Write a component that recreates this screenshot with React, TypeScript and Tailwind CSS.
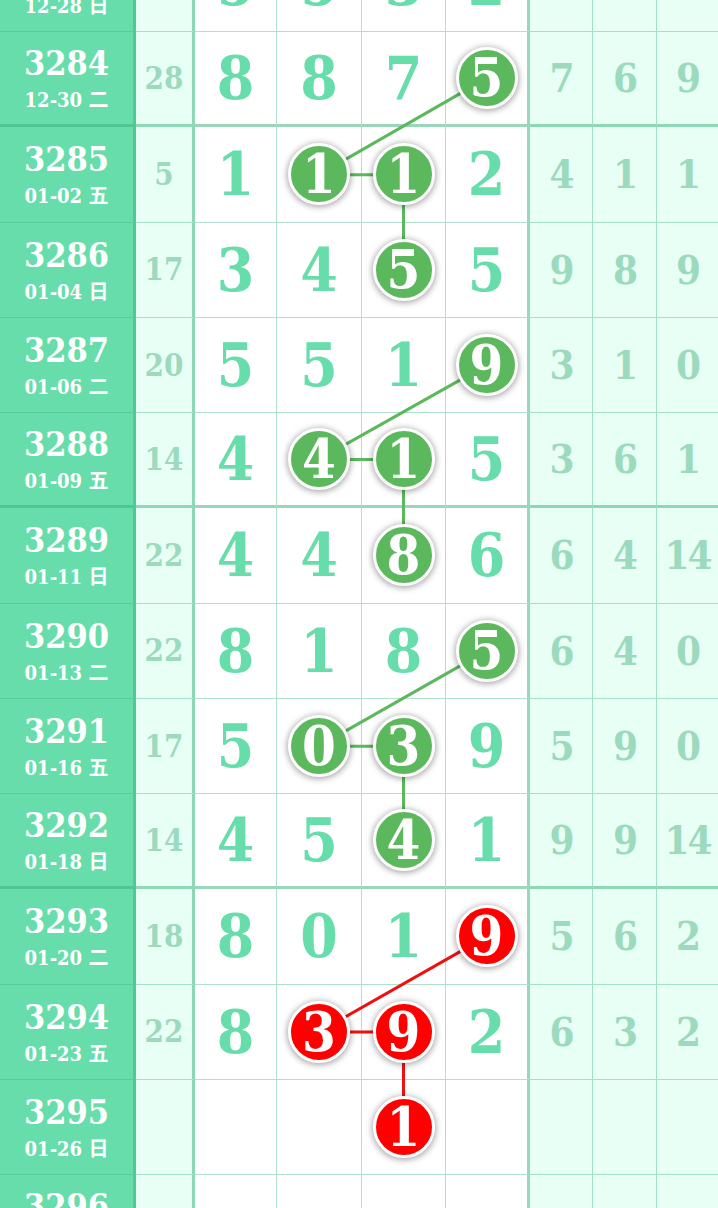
import React from "react";

const ROW_H = 95.25;

type Ball = "g" | "r" | null;
type Row = {
  no: string;
  date: string;
  sum: string;
  d: string[];
  balls: Ball[];
  r: string[];
};

const rows: Row[] = [
  { no: "3283", date: "12-28 日", sum: "16", d: ["5", "5", "3", "2"], balls: [null, null, null, null], r: ["3", "2", "1"] },
  { no: "3284", date: "12-30 二", sum: "28", d: ["8", "8", "7", "5"], balls: [null, null, null, "g"], r: ["7", "6", "9"] },
  { no: "3285", date: "01-02 五", sum: "5", d: ["1", "1", "1", "2"], balls: [null, "g", "g", null], r: ["4", "1", "1"] },
  { no: "3286", date: "01-04 日", sum: "17", d: ["3", "4", "5", "5"], balls: [null, null, "g", null], r: ["9", "8", "9"] },
  { no: "3287", date: "01-06 二", sum: "20", d: ["5", "5", "1", "9"], balls: [null, null, null, "g"], r: ["3", "1", "0"] },
  { no: "3288", date: "01-09 五", sum: "14", d: ["4", "4", "1", "5"], balls: [null, "g", "g", null], r: ["3", "6", "1"] },
  { no: "3289", date: "01-11 日", sum: "22", d: ["4", "4", "8", "6"], balls: [null, null, "g", null], r: ["6", "4", "14"] },
  { no: "3290", date: "01-13 二", sum: "22", d: ["8", "1", "8", "5"], balls: [null, null, null, "g"], r: ["6", "4", "0"] },
  { no: "3291", date: "01-16 五", sum: "17", d: ["5", "0", "3", "9"], balls: [null, "g", "g", null], r: ["5", "9", "0"] },
  { no: "3292", date: "01-18 日", sum: "14", d: ["4", "5", "4", "1"], balls: [null, null, "g", null], r: ["9", "9", "14"] },
  { no: "3293", date: "01-20 二", sum: "18", d: ["8", "0", "1", "9"], balls: [null, null, null, "r"], r: ["5", "6", "2"] },
  { no: "3294", date: "01-23 五", sum: "22", d: ["8", "3", "9", "2"], balls: [null, "r", "r", null], r: ["6", "3", "2"] },
  { no: "3295", date: "01-26 日", sum: "", d: ["", "", "1", ""], balls: [null, null, "r", null], r: ["", "", ""] },
  { no: "3296", date: "01-28 二", sum: "", d: ["", "", "", ""], balls: [null, null, null, null], r: ["", "", ""] },
];

const isThick = (no: string) => (parseInt(no, 10) - 3284) % 4 === 0;

// content centers (x) of the four digit columns
const colX = [235.5, 319, 403.5, 486.5];
const rowY = (i: number) => {
  const bw = isThick(rows[i].no) ? 3 : 1;
  return i * ROW_H + (ROW_H - bw) / 2;
};

const FONT = "font-['DejaVu_Serif_Condensed','DejaVu_Serif','Noto_Sans_CJK_SC',serif]";

function BallView({ v, color }: { v: string; color: "g" | "r" }) {
  return (
    <div
      className={
        "relative z-[2] flex h-[62px] w-[62px] items-center justify-center rounded-full border-[3px] border-white shadow-[0_1px_6px_1px_rgba(0,0,0,0.35)] " +
        (color === "g" ? "bg-[#5cb85c]" : "bg-[#ff0000]")
      }
    >
      <span className="text-[54px] font-bold leading-none text-white">{v}</span>
    </div>
  );
}

export default function App() {
  const segs: { x1: number; y1: number; x2: number; y2: number; c: string }[] = [];
  const starts = [1, 4, 7, 10];
  starts.forEach((s) => {
    const c = s === 10 ? "#ee1111" : "#5cb85c";
    segs.push({ x1: colX[3], y1: rowY(s), x2: colX[1], y2: rowY(s + 1), c });
    segs.push({ x1: colX[1], y1: rowY(s + 1), x2: colX[2], y2: rowY(s + 1), c });
    segs.push({ x1: colX[2], y1: rowY(s + 1), x2: colX[2], y2: rowY(s + 2), c });
  });

  return (
    <div className={"h-[1208px] w-[718px] overflow-hidden bg-white " + FONT}>
      <div className="relative -mt-[63.25px] w-[718px]">
        {rows.map((row) => {
          const thick = isThick(row.no);
          const b = thick ? "border-b-[3px] border-b-[#3cb47e85]" : "border-b border-b-[#3cb47e66]";
          return (
            <div key={row.no} className="flex h-[95.25px]">
              <div
                className={
                  "flex w-[136px] flex-col items-center justify-center border-r-[3px] border-r-[#3cb47e80] bg-[#66ddaa] text-white " + b
                }
              >
                <div className="text-[34px] font-semibold leading-[36px]">{row.no}</div>
                <div className="mt-[8px] text-[20px] font-bold leading-[22px]">{row.date}</div>
              </div>
              <div
                className={
                  "flex w-[59px] items-center justify-center border-r-[3px] border-r-[#3cb47e85] bg-[#e8fff5] text-[31px] font-bold text-[#9cdabe] " + b
                }
              >
                {row.sum}
              </div>
              {row.d.map((v, j) => {
                const w = ["w-[82px]", "w-[85px]", "w-[84px]", "w-[84px]"][j];
                const br = j === 3 ? "border-r-[3px] border-r-[#3cb47e85]" : "border-r border-r-[#3cb47e66]";
                const ball = row.balls[j];
                return (
                  <div key={j} className={"flex items-center justify-center bg-white " + w + " " + br + " " + b}>
                    {ball ? (
                      <BallView v={v} color={ball} />
                    ) : (
                      <span className="text-[60px] font-bold leading-none text-[#66ddaa]">{v}</span>
                    )}
                  </div>
                );
              })}
              {row.r.map((v, j) => {
                const w = ["w-[63px]", "w-[64px]", "w-[61px]"][j];
                const br = j === 2 ? "" : "border-r border-r-[#3cb47e66]";
                return (
                  <div
                    key={j}
                    className={
                      "flex items-center justify-center bg-[#e8fff5] text-[40px] font-bold leading-none tracking-[-2px] text-[#9cdabe] " +
                      w + " " + br + " " + b
                    }
                  >
                    {v}
                  </div>
                );
              })}
            </div>
          );
        })}
        <svg
          className="pointer-events-none absolute left-0 top-0 z-[1]"
          width={718}
          height={rows.length * ROW_H}
        >
          {segs.map((s, i) => (
            <line key={i} x1={s.x1} y1={s.y1} x2={s.x2} y2={s.y2} stroke={s.c} strokeWidth={3} />
          ))}
        </svg>
      </div>
    </div>
  );
}
